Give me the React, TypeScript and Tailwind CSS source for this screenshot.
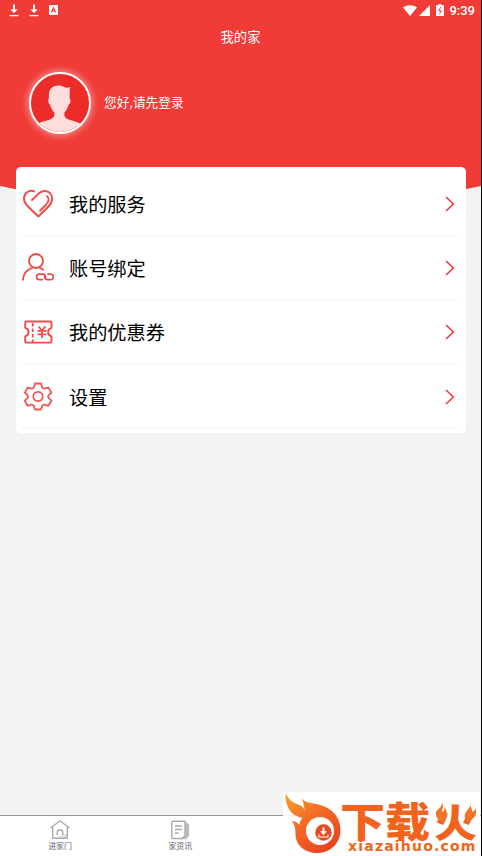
import type { ReactNode } from 'react'

type MenuItem = {
  label: string
  icon: ReactNode
}

function HeartIcon() {
  return (
    <svg className="w-8 h-8 mt-[2px]" viewBox="0 0 32 32" fill="none" stroke="#f04c4a" strokeWidth="2" strokeLinecap="round" strokeLinejoin="round">
      <path d="M12 3.200C7 1.800 2 5 2 10.500c0 3.200 1.600 5.600 4 8L16.300 28.500 26.500 18.500c2.400-2.400 3.600-5 3.600-8C30 5.600 26.600 3 22.500 3c-3 0-4.800 1.300-7 3.600L10 12" />
      <path d="M25 8.200c1.900 1.900 1.900 5 0 7M24.300 16.500l-6.300 6.200" strokeWidth="1.900" />
    </svg>
  )
}

function AccountIcon() {
  return (
    <svg className="w-8 h-8 mt-[2px]" viewBox="0 0 32 32" fill="none" stroke="#f04c4a" strokeWidth="1.9" strokeLinecap="round" strokeLinejoin="round">
      <circle cx="14" cy="9" r="7" />
      <path d="M1 27.700c.3-6 3.600-10 9.300-11.900M17.700 15.800c1.300.4 2.400 1 3.400 1.900" />
      <path d="M20.500 27.600h-3.200a2.700 2.700 0 0 1 0-5.400h3.500c2 0 3.200 1.600 2.700 3.200M26 22.200h2.700a2.700 2.700 0 0 1 0 5.400h-3.200c-2 0-3.300-1.600-2.800-3.200" strokeWidth="1.700" />
    </svg>
  )
}

function CouponIcon() {
  return (
    <svg className="w-8 h-8 mt-px" viewBox="0 0 32 32" fill="none" stroke="#f04c4a" strokeWidth="1.9" strokeLinejoin="round">
      <path d="M4.500 5.500h23.700c.9 0 1.300.5 1.300 1.300v5c-2.300.7-3.400 2.300-3.400 4.200s1.100 3.700 3.400 4.300v5c0 .8-.4 1.300-1.300 1.300H4.500c-.9 0-1.300-.5-1.300-1.300v-5c2.300-.6 3.400-2.400 3.400-4.300s-1.100-3.500-3.400-4.200v-5c0-.8.400-1.300 1.300-1.300z" />
      <path d="M10.700 7v19" strokeDasharray="3.500 2" strokeWidth="1.800" />
      <path d="M16.500 10.500l3.500 4 3.500-4M20 14.500v7.500M15.500 14.900h9M15.500 18.300h9" strokeWidth="1.8" />
    </svg>
  )
}

function GearIcon() {
  return (
    <svg className="w-8 h-8" viewBox="0 0 32 32" fill="none" stroke="#f05654" strokeWidth="1.8" strokeLinejoin="round">
      <path d="M13 3.500h6l1 3.600c.3.800 1.900 1.700 2.800 1.500l3.500-1.100 3.100 5.100-2.600 2.600c-.6.700-.6 2.200 0 2.900l2.600 2.600-3.100 5.100-3.500-1.100c-.9-.2-2.500.7-2.800 1.500l-1 3.300h-6l-1-3.300c-.3-.8-1.900-1.700-2.800-1.500l-3.500 1.100-2.900-5.100 2.600-2.600c.6-.7.6-2.200 0-2.900l-2.600-2.600 2.900-5.100 3.500 1.100c.9.200 2.500-.7 2.800-1.500z" />
      <circle cx="16" cy="16.500" r="4.700" />
    </svg>
  )
}

const menu: MenuItem[] = [
  { label: '我的服务', icon: <HeartIcon /> },
  { label: '账号绑定', icon: <AccountIcon /> },
  { label: '我的优惠券', icon: <CouponIcon /> },
  { label: '设置', icon: <GearIcon /> },
]

function DownloadGlyph() {
  return (
    <svg className="w-[10px] h-[13px]" viewBox="0 0 10 13" fill="#fff">
      <path d="M4 .5h2v5h2.500L5 9.200 1.500 5.500H4zM.5 11h9v1.300h-9z" />
    </svg>
  )
}

function StatusBar() {
  return (
    <div className="h-[20px] pl-[9px] pr-[6px] flex items-center justify-between text-white">
      <div className="flex items-center gap-[10px]">
        <DownloadGlyph />
        <DownloadGlyph />
        <svg className="w-[9px] h-[10px]" viewBox="0 0 9 10">
          <rect width="9" height="10" rx="1" fill="#fff" />
          <path d="M2.500 7.500L4.500 2.800l2 4.700M3.200 6h2.600" fill="none" stroke="#ef3b38" strokeWidth="1.200" />
        </svg>
      </div>
      <div className="flex items-center">
        <svg className="w-[14px] h-[11px]" viewBox="0 0 14 11" fill="#fff">
          <path d="M0 2.500C4-.6 10-.6 14 2.500L7 11z" />
        </svg>
        <svg className="w-[11px] h-[11px] ml-[2px]" viewBox="0 0 11 11" fill="#fff">
          <path d="M11 0v11H0z" />
        </svg>
        <svg className="w-[8px] h-[12px] ml-[6px] -mt-px" viewBox="0 0 8 12">
          <path d="M2.500 0h3v1.300H8V12H0V1.300h2.500z" fill="#fff" />
          <path d="M5 3L2.500 6.800h3L3.300 10.300" fill="none" stroke="#ef3b38" strokeWidth="1" />
        </svg>
        <span className="ml-[5px] pt-px font-['Roboto',sans-serif] text-[13px] leading-5 font-medium">9:39</span>
      </div>
    </div>
  )
}

function Avatar() {
  return (
    <div className="w-[62px] h-[62px] rounded-full border-2 border-white bg-[#eb2c29] overflow-hidden shadow-[0_0_7px_2px_rgba(255,255,255,0.4)]">
      <svg className="w-full h-full" viewBox="0 0 58 58" fill="#ffdddd">
        <path d="M18 24c-.8-8 2.500-12.500 9.500-12.500 2.500 0 4 .5 5.500 1.500 2 .9 4.500.9 6.500 0-.2 1.200-.9 1.800-.8 3.500V25c1.600.5.800 4.800-1 5.500-.8 3.700-2.700 6-4.300 8v3.500c1.500 3 5.600 4 9.100 5 4.500 1.200 7 2.500 9.500 5v8H4v-8c2.500-2.500 5.500-4 10-5 4-1 8-2.200 9.300-5v-3.500c-1.600-2-3.500-4.300-4.300-8-1.800-.7-2.600-5-1-6.500z" />
      </svg>
    </div>
  )
}

function Header() {
  return (
    <header className="h-[167px] flex flex-col">
      <StatusBar />
      <h1 className="h-[34px] flex items-center justify-center text-[13.300px] text-white">我的家</h1>
      <div className="mt-[18px] ml-[29px] flex items-center gap-[13px]">
        <Avatar />
        <span className="-mt-[2px] text-[12.700px] text-white">您好,请先登录</span>
      </div>
    </header>
  )
}

function MenuRow({ label, icon }: MenuItem) {
  return (
    <li className="h-[64.300px] flex items-center border-b border-[#f7f7f7]">
      {icon}
      <span className="ml-[15px] pt-px flex-1 text-[19.200px] leading-7 text-black">{label}</span>
      <svg className="w-[10px] h-4 mr-[6px] mt-px" viewBox="0 0 10 16" fill="none" stroke="#ef3b38" strokeWidth="1.600">
        <path d="M1 1l7.300 7L1 15" />
      </svg>
    </li>
  )
}

function TabBar() {
  return (
    <nav className="h-[41px] border-t border-[#999] bg-white grid grid-cols-4 text-[8px] leading-[10px] text-[#5d6170]">
      <div className="flex flex-col items-center pt-[4px]">
        <svg className="w-5 h-5" viewBox="0 0 20 20" fill="none" stroke="#aaa" strokeWidth="1.400" strokeLinejoin="round">
          <path d="M16.800 8v9.600H6l10.800-4z" fill="#ddd" stroke="none" />
          <path d="M1 7.500L10 1l9 6.500h-1.700V18.300H2.700V7.500z" />
          <path d="M7.300 15v-2.500a2.700 2.700 0 0 1 5.400 0V15" />
        </svg>
        <span className="mt-px">进家门</span>
      </div>
      <div className="flex flex-col items-center pt-[4px]">
        <svg className="w-5 h-5" viewBox="0 0 20 20" fill="none" stroke="#aaa" strokeWidth="1.400" strokeLinejoin="round">
          <path d="M15 3h1.500l2 2v10.500l-2.500 3h-5l4-3z" fill="#bbb" stroke="#bbb" />
          <path d="M3 1.300h12v14.200l-3 3H3c-.8 0-1.200-.4-1.200-1.200V2.500c0-.8.400-1.200 1.200-1.200z" fill="#fff" />
          <path d="M5 6h7M5 9.500h7M5 13h3.500" />
        </svg>
        <span className="mt-px">家资讯</span>
      </div>
      <div className="flex flex-col items-center pt-[4px]">
        <svg className="w-5 h-5" viewBox="0 0 20 20" fill="none" stroke="#aaa" strokeWidth="1.400">
          <path d="M3 7h14v11H3zM6 7V2h8v5M10 7v11" />
        </svg>
        <span className="mt-px">家管家</span>
      </div>
      <div />
    </nav>
  )
}

function Watermark() {
  return (
    <div className="absolute left-[283px] top-[792px] w-[197px] h-[64px] bg-white/95 flex">
      <svg className="w-[59px] h-[62px] shrink-0" viewBox="0 0 59 62">
        <defs>
          <linearGradient id="flame" x1="0" y1="0" x2="0.700" y2="1">
            <stop offset="0" stopColor="#f8a02c" />
            <stop offset="0.500" stopColor="#f46a28" />
            <stop offset="1" stopColor="#ea4420" />
          </linearGradient>
        </defs>
        <path d="M2.500 1c3 7 8 10 14 12 3 1 4 3 5 5-.5-4-1-8-3-12 4 5 9 5 15 6 15 3 24 13 24 26 0 13-10 23-23 23-13 0-22-8-22-19 0-5-.5-9-3.500-13 3 0 6 2 7.500 4 0-3 1-5 3-7C7 24 2 13 2.500 1z" fill="url(#flame)" />
        <circle cx="37" cy="39" r="14" fill="#fff" />
        <circle cx="40.500" cy="40.500" r="8.300" fill="#e94b25" />
        <path d="M39.500 35.300h2v4H44L40.500 43 37 39.300h2.500z" fill="#fff" />
        <path d="M36 42.500V45h9v-2.500" fill="none" stroke="#fff" strokeWidth="1.200" />
      </svg>
      <div className="w-[138px] text-[#f2641d]">
        <div className="h-[46px] flex">
          <span className="w-[92px] -ml-[2px] mr-[3px] mt-[5px] text-[45px] leading-[46px] font-black whitespace-nowrap origin-center scale-y-[0.9]">下载</span>
          <svg className="w-[43px] h-[42px] mt-[10px] overflow-visible" viewBox="0 0 43 42">
            <text x="-1" y="38.800" transform="scale(1 0.900)" fontSize="43" fontWeight="900" fill="#f2641d">火</text>
            <path d="M7 1c3 4-1 6 .5 9C10 9 9 7 10 5c3 6 2 11-1 14-5 1-9-4-8-9C2 7 7 6 7 1zM36 0c-2 5 2 6 1 10 2-1 3-2 3-4 3 6 0 11-7 13-4-3-4-6-2-9s5-5 5-10z" fill="#f2742a" />
          </svg>
        </div>
        <div className="pl-[6px] font-['DejaVu_Sans','Noto_Sans',sans-serif] font-bold text-[14px] leading-[16px] tracking-[1.200px]">
          xiazaihuo.com
        </div>
      </div>
    </div>
  )
}

export default function App() {
  return (
    <div className="relative w-[482px] h-[856px] overflow-hidden border-r border-black bg-[#f3f3f3] font-['Noto_Sans_CJK_SC',sans-serif]">
      <svg className="absolute left-0 top-0 w-[481px] h-[225px]" viewBox="0 0 481 225">
        <path d="M0 0h481v186Q240 238 0 186z" fill="#f03b37" />
      </svg>
      <div className="relative h-full flex flex-col">
        <Header />
        <main className="flex-1 px-4">
          <ul className="w-[450px] h-[266px] pt-[4.500px] pl-[6px] pr-[5px] rounded-[5px] bg-white">
            {menu.map((item) => (
              <MenuRow key={item.label} label={item.label} icon={item.icon} />
            ))}
          </ul>
        </main>
        <TabBar />
      </div>
      <Watermark />
    </div>
  )
}
